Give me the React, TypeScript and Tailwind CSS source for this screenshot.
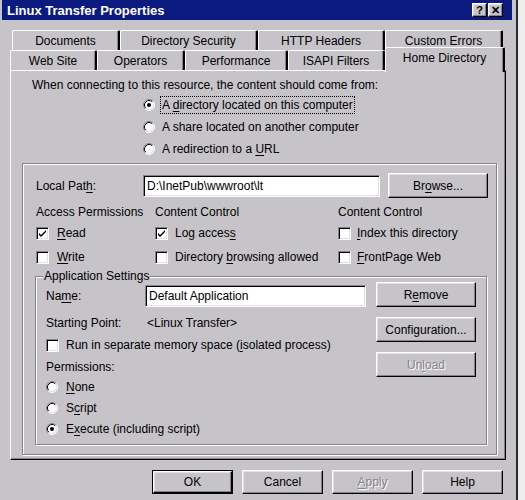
import React from 'react';

// classic 3D bevels
const raised =
  'bg-[#c6c4c8] border border-t-white border-l-white border-r-black border-b-black shadow-[inset_-1px_-1px_0_#858389,inset_1px_1px_0_#e2e0e4]';
const sunken =
  'bg-white border border-t-[#858389] border-l-[#858389] border-r-white border-b-white shadow-[inset_1px_1px_0_#000,inset_-1px_-1px_0_#e2e0e4]';
const etched = 'border border-[#858389] shadow-[1px_1px_0_#fff,inset_1px_1px_0_#fff]';
const greyed = 'text-[#858389] [text-shadow:1px_1px_0_#fff]';

// label with an underlined access key at index k
function Hot({ text, k }: { text: string; k?: number }) {
  if (k === undefined) return <>{text}</>;
  return (
    <>
      {text.slice(0, k)}
      <span className="underline underline-offset-[2px]">{text[k]}</span>
      {text.slice(k + 1)}
    </>
  );
}

function Radio({ checked }: { checked?: boolean }) {
  return (
    <svg width="12" height="12" viewBox="0 0 12 12" className="shrink-0">
      <circle cx="6" cy="6" r="5" fill="#fff" />
      <path d="M2.11 9.89A5.5 5.5 0 0 1 9.89 2.11" fill="none" stroke="#858389" />
      <path d="M9.89 2.11A5.5 5.5 0 0 1 2.11 9.89" fill="none" stroke="#fff" />
      <path d="M2.82 9.18A4.5 4.5 0 0 1 9.18 2.82" fill="none" stroke="#000" />
      <path d="M9.18 2.82A4.5 4.5 0 0 1 2.82 9.18" fill="none" stroke="#e2e0e4" />
      {checked && <circle cx="6" cy="6" r="2" fill="#000" />}
    </svg>
  );
}

function RadioRow({
  label,
  k,
  checked,
  focus,
  gap = 'ml-[5px]',
  h = 'h-[22px]',
}: {
  label: string;
  k?: number;
  checked?: boolean;
  focus?: boolean;
  gap?: string;
  h?: string;
}) {
  return (
    <div className={`flex items-center ${h}`}>
      <Radio checked={checked} />
      <span className={`${gap} ${focus ? 'border border-dotted border-black px-[1px] py-[2px]' : 'px-[2px]'}`}>
        <Hot text={label} k={k} />
      </span>
    </div>
  );
}

function Check({ checked }: { checked?: boolean }) {
  return (
    <div className={`w-[13px] h-[13px] shrink-0 ${sunken} flex items-center justify-center`}>
      {checked && (
        <svg width="9" height="9" viewBox="0 0 9 9">
          <path d="M1 4l2 2 5-5v2L3 8 1 6z" fill="#000" />
        </svg>
      )}
    </div>
  );
}

function CheckRow({ label, k, checked, w, gap = 'ml-[8px]' }: { label: string; k?: number; checked?: boolean; w?: string; gap?: string }) {
  return (
    <div className={`flex items-center ${w ?? ''}`}>
      <Check checked={checked} />
      <span className={gap}>
        <Hot text={label} k={k} />
      </span>
    </div>
  );
}

function Button({
  label,
  k,
  w,
  h,
  disabled,
  isDefault,
}: {
  label: string;
  k?: number;
  w: string;
  h: string;
  disabled?: boolean;
  isDefault?: boolean;
}) {
  const face = (
    <div className={`w-full h-full ${raised} flex items-center justify-center ${disabled ? greyed : ''}`}>
      <Hot text={label} k={k} />
    </div>
  );
  if (isDefault) return <div className={`${w} ${h} border border-black`}>{face}</div>;
  return <div className={`${w} ${h}`}>{face}</div>;
}

function TitleBtn({ children }: { children: React.ReactNode }) {
  return (
    <div className={`w-[15px] h-[14px] ${raised} flex items-center justify-center text-[11px] font-bold`}>
      {children}
    </div>
  );
}

const backTabs = [
  { label: 'Documents', w: 'w-[108px]' },
  { label: 'Directory Security', w: 'w-[138px]' },
  { label: 'HTTP Headers', w: 'w-[127px]' },
  { label: 'Custom Errors', w: 'w-[118px]' },
];

const frontTabs = [
  { label: 'Web Site', w: 'w-[87px]' },
  { label: 'Operators', w: 'w-[88px]' },
  { label: 'Performance', w: 'w-[103px]' },
  { label: 'ISAPI Filters', w: 'w-[97px]' },
];

const tab =
  'h-[20px] flex items-center justify-center bg-[#c6c4c8] border-t border-l border-t-white border-l-white border-r-2 border-r-black shadow-[inset_-1px_0_0_#858389] rounded-tl-[2px] rounded-tr-[2px]';

export default function App() {
  return (
    <div className="w-[525px] h-[500px] overflow-hidden bg-[#ededed] font-['Liberation_Sans',Arial,sans-serif] text-[12px] leading-none text-black">
      <div className="w-[518px] h-[500px] bg-[#c6c4c8] border-r-2 border-r-[#2a2a2a] flex flex-col">
        {/* caption */}
        <div className="ml-[2px] mr-[4px] h-[20px] shrink-0 bg-[#0b1a7e] flex items-center pl-[5px] pr-[9px]">
          <span className="flex-1 text-white font-bold text-[13px]">Linux Transfer Properties</span>
          <div className="flex gap-[1px]">
            <TitleBtn>?</TitleBtn>
            <TitleBtn>✕</TitleBtn>
          </div>
        </div>

        {/* tab strip, back row */}
        <div className="mt-[10px] ml-[12px] flex">
          {backTabs.map((t) => (
            <div key={t.label} className={`${t.w} ${tab}`}>
              {t.label}
            </div>
          ))}
        </div>

        {/* tab strip, front row */}
        <div className="ml-[10px] flex items-end h-[20px]">
          {frontTabs.map((t) => (
            <div key={t.label} className={`${t.w} ${tab}`}>
              {t.label}
            </div>
          ))}
          <div className="relative z-10 w-[120px] h-[25px] -mb-[2px] pb-[4px] flex items-center justify-center bg-[#c6c4c8] border-t border-l border-t-white border-l-white border-r-2 border-r-black shadow-[inset_-1px_0_0_#858389] rounded-tl-[2px] rounded-tr-[2px]">
            Home Directory
          </div>
        </div>

        {/* page */}
        <div className="ml-[10px] w-[496px] h-[390px] shrink-0 flex flex-col border border-t-white border-l-white border-r-black border-b-black shadow-[inset_-1px_-1px_0_#858389]">
          <div className="mt-[5px] ml-[21px] h-[18px] flex items-center">
            When connecting to this resource, the content should come from:
          </div>
          <div className="ml-[132px] flex flex-col">
            <RadioRow label="A directory located on this computer" k={2} checked focus />
            <RadioRow label="A share located on another computer" />
            <RadioRow label="A redirection to a URL" k={19} />
          </div>

          <div className={`mt-[3px] ml-[11px] w-[475px] h-[292px] flex flex-col ${etched}`}>
            <div className="mt-[9px] pl-[13px] h-[25px] flex items-center">
              <span className="w-[107px]">
                <Hot text="Local Path:" k={9} />
              </span>
              <div className={`w-[237px] h-[22px] ${sunken} flex items-center pl-[3px]`}>D:\InetPub\wwwroot\lt</div>
              <div className="ml-[8px]">
                <Button label="Browse..." k={2} w="w-[100px]" h="h-[25px]" />
              </div>
            </div>

            <div className="mt-[5px] pl-[13px] h-[18px] flex items-center">
              <span className="w-[119px]">Access Permissions</span>
              <span className="w-[183px]">Content Control</span>
              <span>Content Control</span>
            </div>
            <div className="mt-[1px] pl-[13px] h-[22px] flex items-center">
              <CheckRow w="w-[119px]" label="Read" k={0} checked />
              <CheckRow w="w-[183px]" label="Log access" k={9} checked gap="ml-[7px]" />
              <CheckRow label="Index this directory" k={0} gap="ml-[6px]" />
            </div>
            <div className="mt-[2px] pl-[13px] h-[22px] flex items-center">
              <CheckRow w="w-[119px]" label="Write" k={0} />
              <CheckRow w="w-[183px]" label="Directory browsing allowed" k={10} gap="ml-[7px]" />
              <CheckRow label="FrontPage Web" k={0} gap="ml-[6px]" />
            </div>

            {/* application settings */}
            <div className={`relative mt-[8px] ml-[12px] w-[452px] h-[169px] flex ${etched}`}>
              <span className="absolute -top-[7px] left-[7px] px-[1px] bg-[#c6c4c8]">Application Settings</span>
              <div className="w-[340px] pl-[10px] flex flex-col">
                <div className="mt-[6px] h-[25px] flex items-center">
                  <span className="w-[99px]">
                    <Hot text="Name:" k={2} />
                  </span>
                  <div className={`w-[221px] h-[22px] ${sunken} flex items-center pl-[3px]`}>Default Application</div>
                </div>
                <div className="mt-[5px] h-[20px] flex items-center">
                  <span className="w-[101px]">Starting Point:</span>
                  <span>&lt;Linux Transfer&gt;</span>
                </div>
                <div className="mt-[2px] h-[20px] flex items-center">
                  <CheckRow label="Run in separate memory space (isolated process)" k={30} gap="ml-[7px]" />
                </div>
                <div className="mt-[2px] h-[19px] flex items-center">Permissions:</div>
                <RadioRow label="None" k={0} h="h-[21px]" gap="ml-[6px]" />
                <RadioRow label="Script" k={1} h="h-[21px]" gap="ml-[6px]" />
                <RadioRow label="Execute (including script)" k={1} checked h="h-[21px]" gap="ml-[6px]" />
              </div>
              <div className="pt-[5px] flex flex-col gap-[10px]">
                <Button label="Remove" k={1} w="w-[100px]" h="h-[25px]" />
                <Button label="Configuration..." w="w-[100px]" h="h-[25px]" />
                <Button label="Unload" k={2} w="w-[100px]" h="h-[25px]" disabled />
              </div>
            </div>
          </div>
        </div>

        {/* dialog buttons */}
        <div className="mt-[10px] ml-[152px] flex gap-[9px]">
          <Button label="OK" w="w-[81px]" h="h-[24px]" isDefault />
          <Button label="Cancel" w="w-[81px]" h="h-[24px]" />
          <Button label="Apply" k={0} w="w-[81px]" h="h-[24px]" disabled />
          <Button label="Help" w="w-[81px]" h="h-[24px]" />
        </div>
      </div>
    </div>
  );
}
